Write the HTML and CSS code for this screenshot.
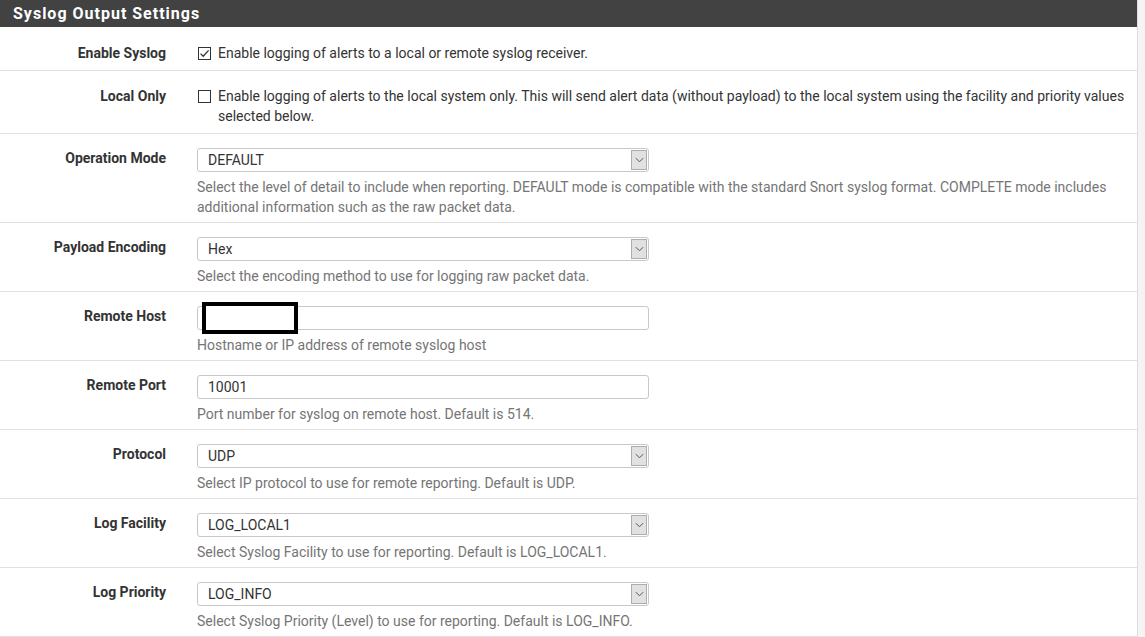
FILE: index.html
```html
<!DOCTYPE html>
<html>
<head>
<meta charset="utf-8">
<link rel="stylesheet" href="styles.css">
</head>
<body>
<div class="page">
  <div class="panel">
    <div class="panel-heading">Syslog Output Settings</div>

    <div class="row row-check row-first">
      <div class="label">Enable Syslog</div>
      <div class="ctrl">
        <label class="check">
          <span class="box"><svg viewBox="0 0 13 13" width="13" height="13"><path d="M2.6 6.6 L5.2 9.3 L10.6 3.4" fill="none" stroke="#333" stroke-width="1.3"/></svg></span>
          <span class="check-text">Enable logging of alerts to a local or remote syslog receiver.</span>
        </label>
      </div>
    </div>

    <div class="row row-check">
      <div class="label">Local Only</div>
      <div class="ctrl">
        <label class="check">
          <span class="box"></span>
          <span class="check-text">Enable logging of alerts to the local system only. This will send alert data (without payload) to the local system using the facility and priority values selected below.</span>
        </label>
      </div>
    </div>

    <div class="row">
      <div class="label">Operation Mode</div>
      <div class="ctrl">
        <div class="select"><span class="val">DEFAULT</span><span class="arrow"><svg viewBox="0 0 10 6" width="9" height="6"><path d="M1 1 L5 5 L9 1" fill="none" stroke="#555" stroke-width="1.1"/></svg></span></div>
        <div class="help">Select the level of detail to include when reporting. DEFAULT mode is compatible with the standard Snort syslog format. COMPLETE mode includes additional information such as the raw packet data.</div>
      </div>
    </div>

    <div class="row">
      <div class="label">Payload Encoding</div>
      <div class="ctrl">
        <div class="select"><span class="val">Hex</span><span class="arrow"><svg viewBox="0 0 10 6" width="9" height="6"><path d="M1 1 L5 5 L9 1" fill="none" stroke="#555" stroke-width="1.1"/></svg></span></div>
        <div class="help">Select the encoding method to use for logging raw packet data.</div>
      </div>
    </div>

    <div class="row">
      <div class="label">Remote Host</div>
      <div class="ctrl">
        <div class="input-wrap">
          <div class="input"></div>
          <div class="redact"></div>
        </div>
        <div class="help">Hostname or IP address of remote syslog host</div>
      </div>
    </div>

    <div class="row">
      <div class="label">Remote Port</div>
      <div class="ctrl">
        <div class="input"><span class="val">10001</span></div>
        <div class="help">Port number for syslog on remote host. Default is 514.</div>
      </div>
    </div>

    <div class="row">
      <div class="label">Protocol</div>
      <div class="ctrl">
        <div class="select"><span class="val">UDP</span><span class="arrow"><svg viewBox="0 0 10 6" width="9" height="6"><path d="M1 1 L5 5 L9 1" fill="none" stroke="#555" stroke-width="1.1"/></svg></span></div>
        <div class="help">Select IP protocol to use for remote reporting. Default is UDP.</div>
      </div>
    </div>

    <div class="row">
      <div class="label">Log Facility</div>
      <div class="ctrl">
        <div class="select"><span class="val">LOG_LOCAL1</span><span class="arrow"><svg viewBox="0 0 10 6" width="9" height="6"><path d="M1 1 L5 5 L9 1" fill="none" stroke="#555" stroke-width="1.1"/></svg></span></div>
        <div class="help">Select Syslog Facility to use for reporting. Default is LOG_LOCAL1.</div>
      </div>
    </div>

    <div class="row">
      <div class="label">Log Priority</div>
      <div class="ctrl">
        <div class="select"><span class="val">LOG_INFO</span><span class="arrow"><svg viewBox="0 0 10 6" width="9" height="6"><path d="M1 1 L5 5 L9 1" fill="none" stroke="#555" stroke-width="1.1"/></svg></span></div>
        <div class="help">Select Syslog Priority (Level) to use for reporting. Default is LOG_INFO.</div>
      </div>
    </div>
  </div>
</div>
</body>
</html>
```

FILE: styles.css
```css
html, body {
  margin: 0;
  padding: 0;
  background: #f4f4f4;
}
body {
  font-family: Roboto, "Liberation Sans", Arial, sans-serif;
  font-size: 14px;
  color: #333;
}
.page {
  width: 1138px;
  height: 637px;
  overflow: hidden;
}
.panel {
  background: #fff;
  border-right: 1px solid #ddd;
  min-height: 637px;
}
.panel-heading {
  background: #424242;
  color: #fff;
  font-weight: 700;
  font-size: 16px;
  letter-spacing: 1px;
  height: 27px;
  line-height: 27px;
  padding-left: 13px;
}
.row {
  display: grid;
  grid-template-columns: 166px 1fr;
  column-gap: 31px;
  padding: 14px 12px 5px 0;
  border-bottom: 1px solid #e0e0e0;
}
.row-check {
  padding-top: 15px;
  padding-bottom: 7px;
}
.row-first {
  padding-top: 16px;
}
.label {
  text-align: right;
  font-weight: 700;
  line-height: 20px;
}
.ctrl {
  min-width: 0;
}
.check {
  display: flex;
  align-items: flex-start;
  gap: 7px;
  line-height: 20px;
}
.box {
  flex: none;
  width: 11px;
  height: 11px;
  border: 1px solid #333;
  margin-top: 4px;
  margin-left: 1px;
  position: relative;
}
.box svg {
  position: absolute;
  left: -1px;
  top: -1px;
}
.select,
.input {
  box-sizing: border-box;
  width: 452px;
  height: 24px;
  border: 1px solid #c8c8c8;
  border-radius: 3px;
  background: #fff;
  display: flex;
  align-items: center;
  position: relative;
}
.val {
  padding-left: 10px;
  flex: 1;
  line-height: 20px;
  color: #333;
}
.arrow {
  flex: none;
  width: 16px;
  height: 20px;
  margin-right: 1px;
  background: #e1e1e1;
  border: 1px solid #adadad;
  box-sizing: border-box;
  display: flex;
  align-items: center;
  justify-content: center;
}
.help {
  margin-top: 5px;
  line-height: 20px;
  color: #757575;
}
.input-wrap {
  position: relative;
  width: 452px;
}
.redact {
  position: absolute;
  left: 5px;
  top: -4px;
  width: 88px;
  height: 24px;
  border: 4px solid #000;
  background: #fff;
}
```
